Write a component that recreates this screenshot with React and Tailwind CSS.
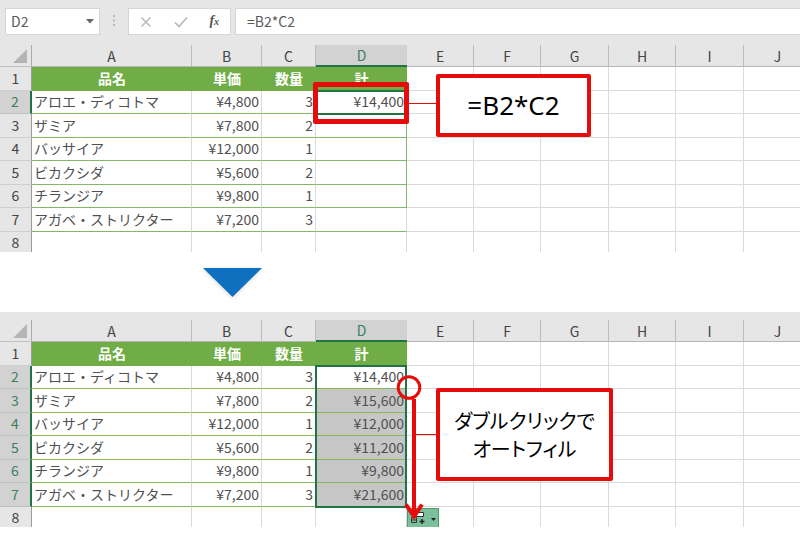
import clsx from "clsx";

const COLUMNS = ["A", "B", "C", "D", "E", "F", "G", "H", "I", "J"];
const COLUMN_WIDTHS = ["w-[160px]", "w-[70px]", "w-[54px]", "w-[91px]", "w-[67px]", "w-[67px]", "w-[68px]", "w-[67px]", "w-[68px]", ""];
const TITLES = ["品名", "単価", "数量", "計"];

const ITEMS = [
  { name: "アロエ・ディコトマ", price: 4800, qty: 3 },
  { name: "ザミア", price: 7800, qty: 2 },
  { name: "バッサイア", price: 12000, qty: 1 },
  { name: "ビカクシダ", price: 5600, qty: 2 },
  { name: "チランジア", price: 9800, qty: 1 },
  { name: "アガベ・ストリクター", price: 7200, qty: 3 },
];

const formatYen = (n) => `¥${n.toLocaleString("en-US")}`;

function RowNumber({ n, active }) {
  return (
    <th
      scope="row"
      className={clsx(
        "border-b p-0 pb-[2px] text-center font-normal",
        active ? "border-r-2 border-b-[#c0c0c0] border-r-[#217346] bg-[#d2d2d2] text-[#3f7d62]" : "border-r border-b-[#cfcfcf] border-r-[#9b9b9b] bg-[#e6e6e6] text-[#444]"
      )}
    >
      {n}
    </th>
  );
}

function EmptyCells({ from }) {
  return COLUMNS.slice(from).map((c) => <td key={c} className="border-r border-b border-[#dadada] p-0" />);
}

// filled: rows of column D that already hold a total, lastSelected: last sheet row of the selection
function Sheet({ label, filled, lastSelected, children }) {
  return (
    <section className="relative overflow-hidden bg-[#e6e6e6] pt-2">
      <table aria-label={label} className="w-full min-w-[812px] table-fixed border-separate border-spacing-0 bg-white text-sm leading-5 text-[#505050]">
        <colgroup>
          <col className="w-[32px]" />
          {COLUMNS.map((c, i) => <col key={c} className={COLUMN_WIDTHS[i]} />)}
        </colgroup>
        <thead>
          <tr className="h-[22px]">
            <td className="border-r border-b border-r-[#ababab] border-b-[#c0c0c0] bg-[#e6e6e6] p-0">
              <svg viewBox="0 0 16 16" className="ml-auto mr-[3px] h-4 w-4" aria-hidden="true">
                <path d="M15 1v14H1z" fill="#b5b5b5" />
              </svg>
            </td>
            {COLUMNS.map((c) => (
              <th
                key={c}
                scope="col"
                className={clsx(
                  "p-0 text-center font-normal",
                  c === "D" ? "border-b-2 border-[#217346] bg-[#d2d2d2] text-[#3f7d62]" : "border-r border-b border-r-[#bcbcbc] border-b-[#b5b5b5] bg-[#e6e6e6] text-[#444]"
                )}
              >
                {c}
              </th>
            ))}
          </tr>
        </thead>
        <tbody>
          <tr className="h-6">
            <RowNumber n={1} />
            {TITLES.map((t) => <td key={t} className="bg-[#70ad47] p-0 pb-[2px] text-center font-bold text-white">{t}</td>)}
            <EmptyCells from={4} />
          </tr>
          {ITEMS.map((item, i) => {
            const row = i + 2;
            const selected = row <= lastSelected;
            return (
              <tr key={item.name} className="odd:h-6 even:h-[23px]">
                <RowNumber n={row} active={selected} />
                <td className="border-r border-b border-r-[#dadada] border-b-[#84b863] p-0 pb-[2px] pl-[2px] whitespace-nowrap">{item.name}</td>
                <td className="border-r border-b border-r-[#dadada] border-b-[#84b863] p-0 pr-[2px] pb-[2px] text-right">{formatYen(item.price)}</td>
                <td className="border-r border-b border-r-[#dadada] border-b-[#84b863] p-0 pr-[2px] pb-[2px] text-right">{item.qty}</td>
                <td
                  className={clsx(
                    "border-r border-b border-b-[#84b863] p-0 pr-[2px] pb-[2px] text-right",
                    row < 7 ? "border-r-[#84b863]" : "border-r-[#dadada]",
                    selected && row > 2 && "bg-[#c6c6c6]"
                  )}
                >
                  {i < filled ? formatYen(item.price * item.qty) : ""}
                </td>
                <EmptyCells from={4} />
              </tr>
            );
          })}
          <tr className="h-5">
            <th scope="row" className="border-r border-[#9b9b9b] bg-[#e6e6e6] p-0 text-center font-normal text-[#444]">8</th>
            {COLUMNS.map((c) => <td key={c} className="border-r border-[#dadada] p-0" />)}
          </tr>
        </tbody>
      </table>
      {children}
    </section>
  );
}

function FormulaBar() {
  return (
    <div className="flex bg-[#e6e6e6] pt-2 pb-[2px] pl-[5px] text-sm text-[#5a5a5a]">
      <div className="flex h-[27px] w-[95px] items-center border border-[#d6d6d6] bg-white">
        <input aria-label="名前ボックス" defaultValue="D2" className="w-full min-w-0 flex-1 pb-[2px] pl-[5px] outline-none" />
        <button type="button" aria-label="名前の一覧" className="flex h-full w-[18px] items-center justify-center">
          <svg viewBox="0 0 8 5" className="h-[5px] w-2"><path d="M0 0h8L4 4.5z" fill="#666" /></svg>
        </button>
      </div>
      <svg viewBox="0 0 4 13" className="mx-3 mt-[6px] h-[13px] w-1" aria-hidden="true">
        <path d="M1 1h2v2H1zM1 5.500h2v2H1zM1 10h2v2H1z" fill="#b8b8b8" />
      </svg>
      <div className="flex h-[27px] w-[103px] items-center justify-around border border-[#d6d6d6] bg-white">
        <button type="button" aria-label="キャンセル">
          <svg viewBox="0 0 12 12" className="h-3 w-3"><path d="M1.500 1.500l9 9M10.500 1.500l-9 9" stroke="#b9b9b9" strokeWidth="1.500" fill="none" /></svg>
        </button>
        <button type="button" aria-label="入力">
          <svg viewBox="0 0 14 12" className="h-3 w-[14px]"><path d="M1 6.500l4 4L13 1.500" stroke="#b9b9b9" strokeWidth="1.700" fill="none" /></svg>
        </button>
        <button type="button" aria-label="関数の挿入" className="font-['Liberation_Serif',serif] text-sm leading-4 font-bold text-[#555] italic">
          f<span className="text-[10px]">x</span>
        </button>
      </div>
      <input aria-label="数式バー" defaultValue="=B2*C2" className="ml-1 h-[27px] min-w-0 flex-1 border border-r-0 border-[#d6d6d6] bg-white pb-[2px] pl-[11px] outline-none" />
    </div>
  );
}

export default function App() {
  return (
    <main className="min-h-screen overflow-hidden bg-white font-['Noto_Sans_CJK_JP',sans-serif]">
      <FormulaBar />
      <Sheet label="数式の入力" filled={1} lastSelected={2}>
        <div className="absolute top-[53px] left-[315px] h-[25px] w-[92px] border-2 border-[#217346]" />
        <div className="absolute top-[45px] left-[313px] h-[42px] w-[96px] rounded-[2px] border-[5px] border-[#e60c0c]" />
        <div className="absolute top-[66px] left-[409px] h-px w-[27px] bg-[#e60c0c]" />
        <div className="absolute top-[37px] left-[436px] flex h-[63px] w-[155px] items-center justify-center rounded-[2px] border-4 border-[#e60c0c] bg-white pb-[2px] font-['Noto_Sans',sans-serif] text-[26px] leading-8 text-black">
          =B2*C2
        </div>
      </Sheet>

      <div className="h-[60px] pt-4 pl-[203px]">
        <svg viewBox="0 0 60 34" className="h-[34px] w-[60px] drop-shadow-sm" aria-hidden="true">
          <path d="M0 0h59L29.500 29z" fill="#0f70c0" />
        </svg>
      </div>

      <Sheet label="オートフィルの結果" filled={6} lastSelected={7}>
        <div className="absolute top-[53px] left-[315px] h-[143px] w-[92px] border-2 border-[#217346]" />
        <button type="button" aria-label="オートフィル オプション" className="absolute top-[196px] left-[407px] h-[20px] w-[32px] border border-[#4e9a72] bg-[#7cc09b]">
          <svg viewBox="0 0 30 18" className="h-full w-full">
            <path d="M8.500 3.500h7v4h-7z" fill="#fff" stroke="#333" />
            <path d="M3.500 8.500h5v5h-5zM3.500 11h5" fill="none" stroke="#333" />
            <path d="M11.500 12.500h5M14 10v5" stroke="#222" strokeWidth="1.500" />
            <path d="M23 9h5l-2.500 3z" fill="#222" />
          </svg>
        </button>
        <svg viewBox="0 0 44 150" className="absolute top-[60px] left-[394px] h-[150px] w-[44px]" fill="none" stroke="#e60c0c" aria-hidden="true">
          <circle cx="15" cy="15.500" r="10.800" strokeWidth="3" />
          <path d="M20 27v116" strokeWidth="4" />
          <path d="M12 132.500L20 144.500l8-12" strokeWidth="4" />
          <path d="M21 62.500h22" />
        </svg>
        <div className="absolute top-[76px] left-[436px] flex h-[93px] w-[177px] flex-col items-center justify-center rounded-[2px] border-4 border-[#e60c0c] bg-white text-xl leading-7 whitespace-nowrap text-black [font-feature-settings:'palt']">
          <span>ダブルクリックで</span>
          <span>オートフィル</span>
        </div>
      </Sheet>
    </main>
  );
}
